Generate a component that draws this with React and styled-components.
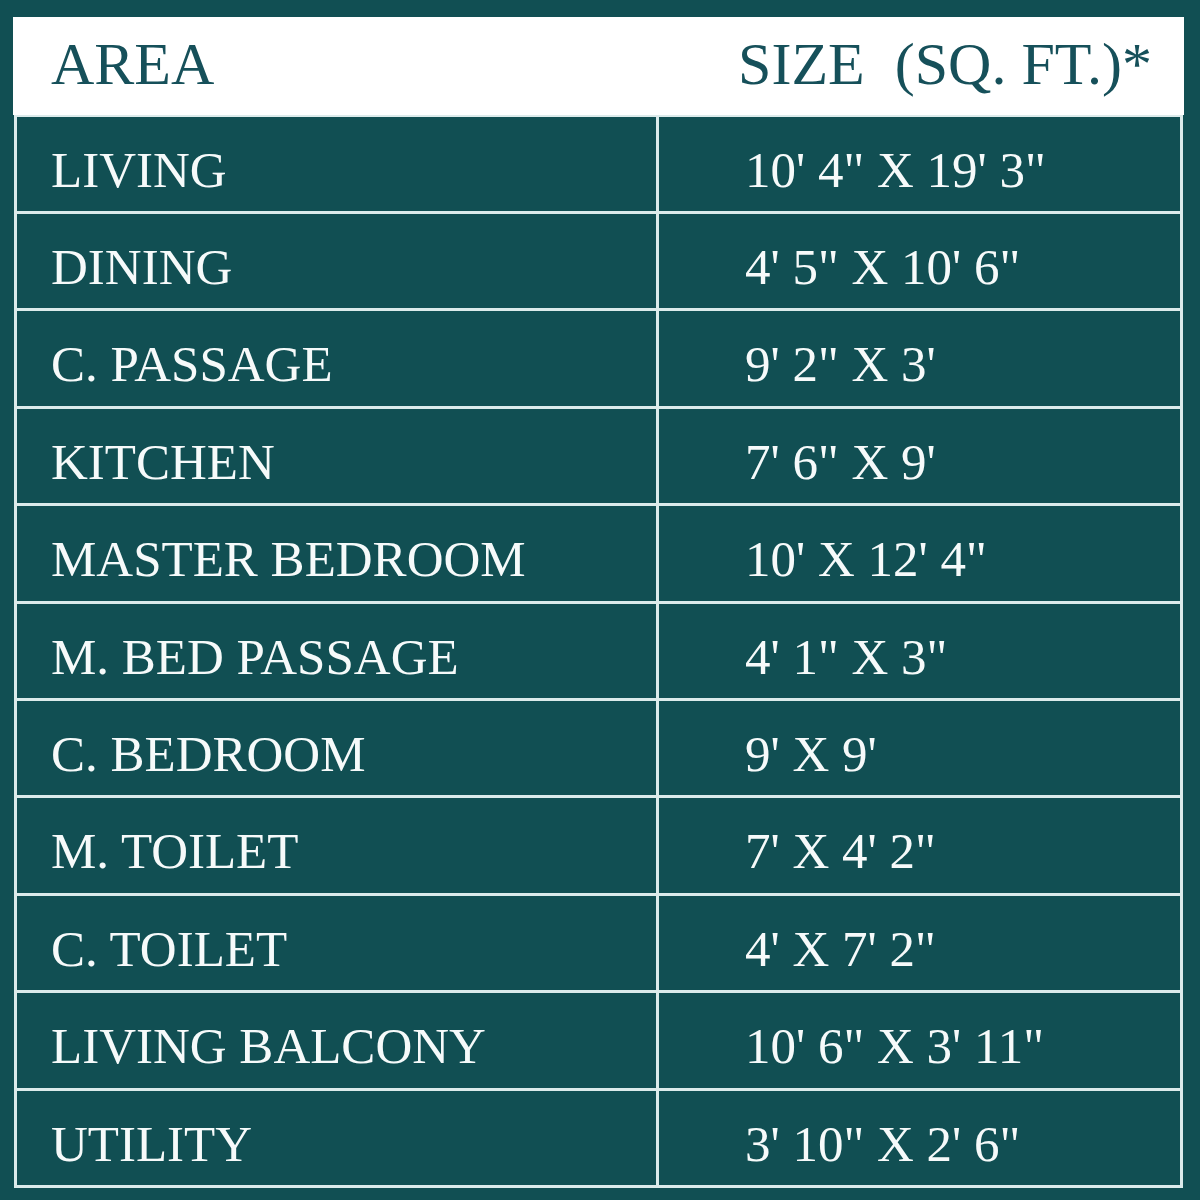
import React from 'react';
import styled, { createGlobalStyle } from 'styled-components';

const GlobalStyle = createGlobalStyle`
  html, body {
    margin: 0;
    padding: 0;
    background: #114f53;
  }
  body {
    font-family: "Liberation Serif", "Times New Roman", serif;
  }
`;

const rooms = [
  ['LIVING', `10' 4" X 19' 3"`],
  ['DINING', `4' 5" X 10' 6"`],
  ['C. PASSAGE', `9' 2" X 3'`],
  ['KITCHEN', `7' 6" X 9'`],
  ['MASTER BEDROOM', `10' X 12' 4"`],
  ['M. BED PASSAGE', `4' 1" X 3"`],
  ['C. BEDROOM', `9' X 9'`],
  ['M. TOILET', `7' X 4' 2"`],
  ['C. TOILET', `4' X 7' 2"`],
  ['LIVING BALCONY', `10' 6" X 3' 11"`],
  ['UTILITY', `3' 10" X 2' 6"`],
];

const App = () => {
  return (
    <Page>
      <GlobalStyle />
      <Table>
        <Header>
          <HeadCell>AREA</HeadCell>
          <HeadCell>SIZE  (SQ. FT.)*</HeadCell>
        </Header>
        <Body>
          {rooms.map(([area, size], i) => (
            <Row key={area} first={i === 0}>
              <Cell pad={34} divider>{area}</Cell>
              <Cell pad={86}>{size}</Cell>
            </Row>
          ))}
        </Body>
      </Table>
    </Page>
  );
};

const Page = styled.div`
  width: 1200px;
  height: 1200px;
  background: #114f53;
  padding: 17px 16px 0 13px;
  box-sizing: border-box;
`;

const Table = styled.div`
  display: flex;
  flex-direction: column;
`;

const Header = styled.div`
  height: 98px;
  box-sizing: border-box;
  background: #ffffff;
  display: flex;
  justify-content: space-between;
  padding: 13px 32px 0 38px;
`;

const HeadCell = styled.div`
  font-size: 60px;
  color: #16505a;
  white-space: pre;
`;

const Body = styled.div`
  border: 3px solid #dcebeb;
  border-top: none;
  margin: 0 1px;
`;

const Row = styled.div`
  display: grid;
  grid-template-columns: 642px 1fr;
  border-top: ${(p) => (p.first ? '2px' : '3px')} solid #dcebeb;
  height: ${(p) => (p.first ? '96px' : '97.4px')};
  box-sizing: border-box;
`;

const Cell = styled.div`
  padding: 24px 0 0 ${(p) => p.pad}px;
  font-size: 51px;
  color: #f6fafa;
  white-space: pre;
  border-right: ${(p) => (p.divider ? '3px solid #dcebeb' : 'none')};
`;

export default App;
